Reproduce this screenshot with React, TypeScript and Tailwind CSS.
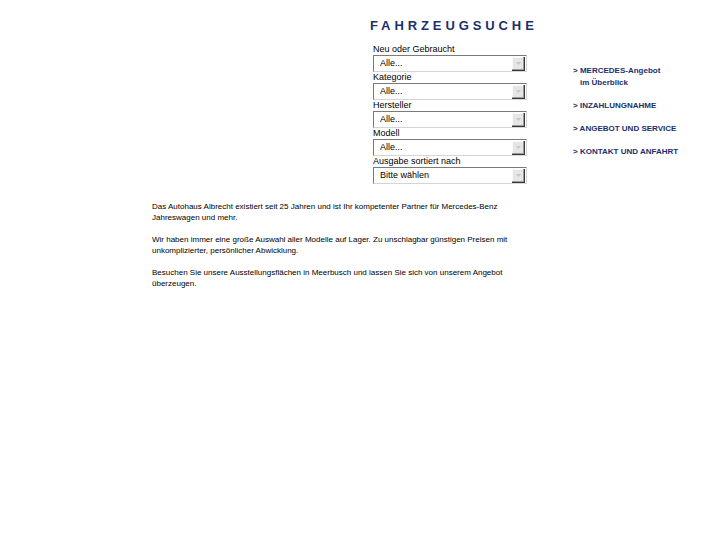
import React from 'react';

const fields = [
  { label: 'Neu oder Gebraucht', value: 'Alle...' },
  { label: 'Kategorie', value: 'Alle...' },
  { label: 'Hersteller', value: 'Alle...' },
  { label: 'Modell', value: 'Alle...' },
  { label: 'Ausgabe sortiert nach', value: 'Bitte wählen' },
];

const navItems = [
  ['MERCEDES-Angebot', 'im Überblick'],
  ['INZAHLUNGNAHME'],
  ['ANGEBOT UND SERVICE'],
  ['KONTAKT UND ANFAHRT'],
];

const SelectBox: React.FC<{ value: string }> = ({ value }) => (
  <div className="flex h-[17px] w-[154px] items-center border border-b-[#d4d4d4] border-r-[#d4d4d4] border-l-[#7a7a7a] border-t-[#7a7a7a] bg-white pl-[6px] pr-[1px]">
    <span className="flex-1 text-[9px] leading-none text-black">{value}</span>
    <div className="flex h-[14px] w-[13px] items-center justify-center border-b border-r border-b-[#3a3a3a] border-r-[#3a3a3a] bg-[#e6e6e6] shadow-[inset_-1px_-1px_0_#9a9a9a,inset_1px_1px_0_#fafafa]">
      <svg width="5" height="3" viewBox="0 0 5 3">
        <path d="M0 0h5L2.5 3z" fill="#c8c8c8" />
      </svg>
    </div>
  </div>
);

export default function App() {
  return (
    <div
      className="relative h-[545px] w-[727px] bg-white"
      style={{ fontFamily: '"Liberation Sans", Arial, sans-serif' }}
    >
      <div className="flex pt-[18px]">
        {/* Left column */}
        <div className="w-[373px] shrink-0" />

        {/* Search */}
        <div className="w-[190px] shrink-0">
          <h1 className="ml-[-3px] text-[13px] font-bold leading-[16px] tracking-[3.9px] text-[#1c2f6b]">FAHRZEUGSUCHE</h1>
          <div className="mt-[10px] flex flex-col">
            {fields.map((f) => (
              <div key={f.label} className="flex flex-col">
                <span className="h-[11px] text-[9px] leading-[11px] text-black">{f.label}</span>
                <SelectBox value={f.value} />
              </div>
            ))}
          </div>
        </div>

        {/* Right nav */}
        <div className="mt-[47px] flex flex-col gap-[11px] pl-[10px]">
          {navItems.map((item, i) => (
            <div key={i} className="text-[8px] font-bold leading-[12px] text-[#1c2f6b]">
              <div>&gt; {item[0]}</div>
              {item[1] && <div className="pl-[7px]">{item[1]}</div>}
            </div>
          ))}
        </div>
      </div>

      <div className="ml-[152px] mt-[17px] flex w-[360px] flex-col gap-[11px] text-[8px] leading-[11px] text-black">
        <p>Das Autohaus Albrecht existiert seit 25 Jahren und ist Ihr kompetenter Partner für Mercedes-Benz Jahreswagen und mehr.</p>
        <p>Wir haben immer eine große Auswahl aller Modelle auf Lager. Zu unschlagbar günstigen Preisen mit unkomplizierter, persönlicher Abwicklung.</p>
        <p>Besuchen Sie unsere Ausstellungsflächen in Meerbusch und lassen Sie sich von unserem Angebot überzeugen.</p>
      </div>
    </div>
  );
}
